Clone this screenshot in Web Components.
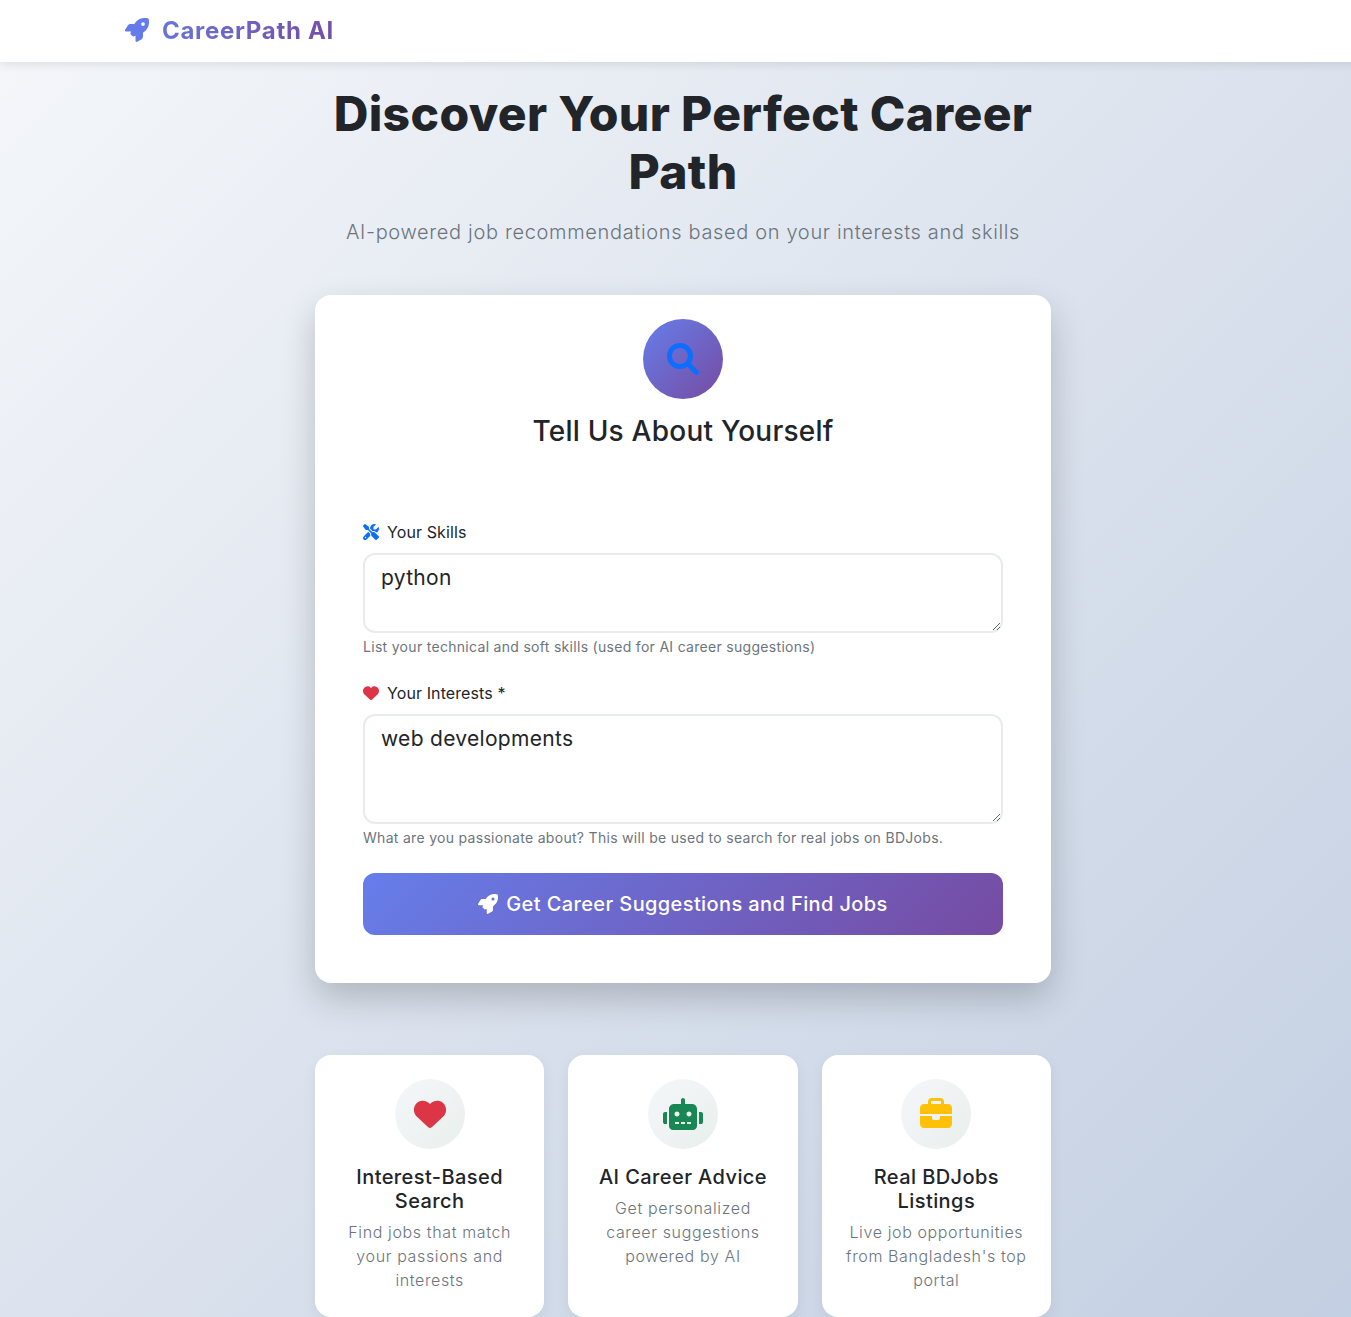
<!DOCTYPE html>
<html lang="en">
<head>
<meta charset="utf-8">
<title>CareerPath AI</title>
<style>
    html {
        height: 1317px;
        overflow: hidden;
    }

    body {
        margin: 0;
        width: 1366px;
        min-height: 1341px;
        font-family: Inter, "Open Sans", sans-serif;
        color: #212529;
        background: linear-gradient(135deg, #f5f7fa 0%, #c3cfe2 100%);
    }
</style>
</head>
<body>
<career-navbar brand="CareerPath AI"></career-navbar>

<page-hero
    heading="Discover Your Perfect Career Path"
    sub="AI-powered job recommendations based on your interests and skills"></page-hero>

<search-card heading="Tell Us About Yourself">
    <form-field icon="tools" color="#0d6efd" label="Your Skills" height="80"
        value="python"
        hint="List your technical and soft skills (used for AI career suggestions)"></form-field>
    <form-field icon="heart" color="#dc3545" label="Your Interests *" height="110"
        value="web developments"
        hint="What are you passionate about? This will be used to search for real jobs on BDJobs."></form-field>
    <gradient-button icon="rocket">Get Career Suggestions and Find Jobs</gradient-button>
</search-card>

<feature-grid>
    <feature-card icon="heart" color="#dc3545" heading="Interest-Based Search">Find jobs that match your passions and interests</feature-card>
    <feature-card icon="robot" color="#198754" heading="AI Career Advice">Get personalized career suggestions powered by AI</feature-card>
    <feature-card icon="briefcase" color="#ffc107" heading="Real BDJobs Listings">Live job opportunities from Bangladesh's top portal</feature-card>
</feature-grid>

<script>
const ICONS = {
    rocket: [512, 'M156.6 384.9L125.7 354c-8.5-8.5-11.5-20.8-7.7-32.2c3-8.9 7-20.5 11.8-33.8L24 288c-8.6 0-16.6-4.6-20.9-12.1s-4.2-16.7 .2-24.1l52.5-88.5c13-21.9 36.5-35.3 61.9-35.3l82.3 0c2.4-4 4.8-7.7 7.2-11.3C289.1-4.1 411.1-8.1 483.9 5.3c11.6 2.1 20.6 11.2 22.8 22.8c13.4 72.9 9.3 194.8-111.4 276.7c-3.5 2.4-7.3 4.8-11.3 7.2v82.3c0 25.4-13.4 49-35.3 61.9l-88.5 52.5c-7.4 4.4-16.6 4.5-24.1 .2s-12.1-12.2-12.1-20.9V380.8c-14.1 4.9-26.4 8.9-35.7 11.9c-11.2 3.6-23.4 .5-31.8-7.8zM384 168a40 40 0 1 0 0-80 40 40 0 1 0 0 80z'],
    search: [512, 'M500.3 443.7l-119.7-119.7c27.22-40.41 40.65-90.9 33.46-144.7C401.8 87.79 326.8 13.32 235.2 1.723C99.01-15.51-15.51 99.01 1.724 235.2c11.6 91.64 86.08 166.7 177.6 178.9c53.8 7.189 104.3-6.236 144.7-33.46l119.7 119.7c15.62 15.62 40.95 15.62 56.57 0C515.9 484.7 515.9 459.3 500.3 443.7zM79.1 208c0-70.58 57.42-128 128-128s128 57.42 128 128c0 70.58-57.42 128-128 128S79.1 278.6 79.1 208z'],
    heart: [512, 'M47.6 300.4L228.3 469.1c7.5 7 17.4 10.9 27.7 10.9s20.2-3.9 27.7-10.9L464.4 300.4c30.4-28.3 47.6-68 47.6-109.5v-5.8c0-69.9-50.5-129.5-119.4-141C347 36.5 300.6 51.4 268 84L256 96 244 84c-32.6-32.6-79-47.5-124.6-39.9C50.5 55.6 0 115.2 0 185.1v5.8c0 41.5 17.2 81.2 47.6 109.5z'],
    briefcase: [512, 'M184 48H328c4.4 0 8 3.6 8 8V96H176V56c0-4.4 3.6-8 8-8zm-56 8V96H64C28.7 96 0 124.7 0 160v96H192 320 512V160c0-35.3-28.7-64-64-64H384V56c0-30.9-25.1-56-56-56H184c-30.9 0-56 25.1-56 56zM512 288H320v32c0 17.7-14.3 32-32 32H224c-17.7 0-32-14.3-32-32V288H0V416c0 35.3 28.7 64 64 64H448c35.3 0 64-28.7 64-64V288z'],
    robot: [640, 'M9.375 233.4C3.375 239.4 0 247.5 0 256v128c0 8.5 3.375 16.62 9.375 22.62S23.5 416 32 416h32V224H32C23.5 224 15.38 227.4 9.375 233.4zM464 96H352V32c0-17.62-14.38-32-32-32S288 14.38 288 32v64H176C131.8 96 96 131.8 96 176V448c0 35.38 28.62 64 64 64h320c35.38 0 64-28.62 64-64V176C544 131.8 508.3 96 464 96zM256 416H192v-32h64V416zM224 296C201.9 296 184 278.1 184 256S201.9 216 224 216S264 233.9 264 256S246.1 296 224 296zM352 416H288v-32h64V416zM448 416h-64v-32h64V416zM416 296c-22.12 0-40-17.88-40-40S393.9 216 416 216S456 233.9 456 256S438.1 296 416 296zM630.6 233.4C624.6 227.4 616.5 224 608 224h-32v192h32c8.5 0 16.62-3.375 22.62-9.375S640 392.5 640 384V256C640 247.5 636.6 239.4 630.6 233.4z'],
    tools: [512, 'M78.6 5C69.1-2.4 55.6-1.5 47 7L7 47c-8.5 8.5-9.4 22-2.1 31.6l80 104c4.5 5.9 11.6 9.4 19 9.4h54.1l109 109c-14.7 29-10 65.4 14.3 89.6l112 112c12.5 12.5 32.8 12.5 45.3 0l64-64c12.5-12.5 12.5-32.8 0-45.3l-112-112c-24.2-24.2-60.6-29-89.6-14.3l-109-109V104c0-7.5-3.5-14.5-9.4-19L78.6 5zM19.9 396.1C7.2 408.8 0 426.1 0 444.1C0 481.6 30.4 512 67.9 512c18 0 35.3-7.2 48-19.9L233.7 374.3c-7.8-20.9-9-43.6-3.6-65.1l-61.7-61.7L19.9 396.1zM512 144c0-10.5-1.1-20.7-3.2-30.5c-2.4-11.2-16.1-14.1-24.2-6l-63.9 63.9c-3 3-7.1 4.7-11.3 4.7H352c-8.8 0-16-7.2-16-16V102.6c0-4.2 1.7-8.3 4.7-11.3l63.9-63.9c8.1-8.1 5.2-21.8-6-24.2C388.7 1.1 378.5 0 368 0C288.5 0 224 64.5 224 144l0 .8 85.3 85.3c36-9.1 75.8 .5 104 28.7L429 274.5c49-23 83-72.8 83-130.5zM56 432a24 24 0 1 1 48 0 24 24 0 1 1 -48 0z']
};

class FaIcon extends HTMLElement {
    constructor() {
        super();
        this.attachShadow({ mode: 'open' });
    }

    connectedCallback() {
        const [width, path] = ICONS[this.getAttribute('name')];
        const size = this.getAttribute('size') || 16;
        this.shadowRoot.innerHTML = `
            <style>
                :host { display: inline-flex; line-height: 0; color: inherit; }
                svg { height: ${size}px; width: ${size * width / 512}px; fill: currentColor; }
            </style>
            <svg viewBox="0 0 ${width} 512" aria-hidden="true"><path d="${path}"></path></svg>
        `;
    }
}

class CareerNavbar extends HTMLElement {
    constructor() {
        super();
        this.attachShadow({ mode: 'open' });
    }

    connectedCallback() {
        this.shadowRoot.innerHTML = `
            <style>
                :host {
                    display: block;
                    height: 62px;
                    background: #fff;
                    box-shadow: 0 2px 10px rgba(0, 0, 0, .1);
                    position: relative;
                }

                .inner {
                    width: 1116px;
                    margin: 0 auto;
                    height: 60px;
                    display: flex;
                    align-items: center;
                }

                .brand {
                    display: flex;
                    align-items: center;
                    gap: 13px;
                    font-size: 24px;
                    font-weight: 700;
                    letter-spacing: .7px;
                    background: linear-gradient(135deg, #667eea, #764ba2);
                    -webkit-background-clip: text;
                    background-clip: text;
                    color: transparent;
                }

                fa-icon { color: #667bea; }
            </style>
            <div class="inner">
                <div class="brand"><fa-icon name="rocket" size="24"></fa-icon><span>${this.getAttribute('brand')}</span></div>
            </div>
        `;
    }
}

class PageHero extends HTMLElement {
    constructor() {
        super();
        this.attachShadow({ mode: 'open' });
    }

    connectedCallback() {
        this.shadowRoot.innerHTML = `
            <style>
                :host {
                    display: block;
                    width: 736px;
                    margin: 0 auto;
                    padding-top: 23px;
                    text-align: center;
                }

                h1 {
                    margin: 0 0 16px;
                    font-size: 48px;
                    line-height: 58px;
                    font-weight: 800;
                    letter-spacing: .35px;
                }

                p {
                    margin: 0;
                    font-size: 20px;
                    line-height: 30px;
                    font-weight: 300;
                    letter-spacing: .66px;
                    color: #6c757d;
                }
            </style>
            <h1>${this.getAttribute('heading')}</h1>
            <p>${this.getAttribute('sub')}</p>
        `;
    }
}

class SearchCard extends HTMLElement {
    constructor() {
        super();
        this.attachShadow({ mode: 'open' });
    }

    connectedCallback() {
        this.shadowRoot.innerHTML = `
            <style>
                :host {
                    display: block;
                    box-sizing: border-box;
                    width: 736px;
                    height: 688px;
                    margin: 48px auto 0;
                    padding: 24px 48px 48px;
                    background: #fff;
                    border-radius: 16px;
                    box-shadow: 0 15px 35px rgba(0, 0, 0, .2);
                }

                .head {
                    display: flex;
                    flex-direction: column;
                    align-items: center;
                    margin-bottom: 72px;
                }

                .circle {
                    width: 80px;
                    height: 80px;
                    border-radius: 50%;
                    display: flex;
                    align-items: center;
                    justify-content: center;
                    background: linear-gradient(135deg, #667eea, #764ba2);
                    color: #0d6efd;
                    margin-bottom: 15px;
                }

                h3 {
                    margin: 0;
                    font-size: 28px;
                    line-height: 34px;
                    font-weight: 500;
                    letter-spacing: .23px;
                }
            </style>
            <div class="head">
                <div class="circle"><fa-icon name="search" size="32"></fa-icon></div>
                <h3>${this.getAttribute('heading')}</h3>
            </div>
            <slot></slot>
        `;
    }
}

class FormField extends HTMLElement {
    constructor() {
        super();
        this.attachShadow({ mode: 'open' });
    }

    connectedCallback() {
        this.shadowRoot.innerHTML = `
            <style>
                :host {
                    display: block;
                    margin-bottom: 23px;
                }

                label {
                    display: flex;
                    align-items: center;
                    gap: 8px;
                    height: 24px;
                    margin-bottom: 9px;
                    font-size: 16px;
                    font-weight: 400;
                    letter-spacing: .1px;
                    color: ${this.getAttribute('color')};
                }

                label span { color: #212529; }

                textarea {
                    display: block;
                    box-sizing: border-box;
                    width: 100%;
                    height: ${this.getAttribute('height')}px;
                    padding: 8px 16px;
                    border: 2px solid #e9ecef;
                    border-radius: 12px;
                    outline: none;
                    font: 400 21px/30px Inter, "Open Sans", sans-serif;
                    letter-spacing: .3px;
                    color: #212529;
                    background: #fff;
                }

                small {
                    display: block;
                    margin-top: 3px;
                    font-size: 14px;
                    line-height: 22px;
                    letter-spacing: .3px;
                    color: #6c757d;
                }
            </style>
            <label><fa-icon name="${this.getAttribute('icon')}" size="16"></fa-icon><span>${this.getAttribute('label')}</span></label>
            <textarea>${this.getAttribute('value')}</textarea>
            <small>${this.getAttribute('hint')}</small>
        `;
    }
}

class GradientButton extends HTMLElement {
    constructor() {
        super();
        this.attachShadow({ mode: 'open' });
    }

    connectedCallback() {
        this.shadowRoot.innerHTML = `
            <style>
                :host { display: block; margin-top: 24px; }

                button {
                    display: flex;
                    align-items: center;
                    justify-content: center;
                    gap: 8px;
                    width: 100%;
                    height: 62px;
                    border: 0;
                    border-radius: 12px;
                    background: linear-gradient(135deg, #667eea, #764ba2);
                    color: #fff;
                    font: 500 20px Inter, "Open Sans", sans-serif;
                    letter-spacing: .39px;
                }
            </style>
            <button type="button"><fa-icon name="${this.getAttribute('icon')}" size="20"></fa-icon><slot></slot></button>
        `;
    }
}

class FeatureGrid extends HTMLElement {
    constructor() {
        super();
        this.attachShadow({ mode: 'open' });
        this.shadowRoot.innerHTML = `
            <style>
                :host {
                    display: grid;
                    grid-template-columns: repeat(3, 1fr);
                    gap: 24px;
                    width: 736px;
                    margin: 72px auto 0;
                }
            </style>
            <slot></slot>
        `;
    }
}

class FeatureCard extends HTMLElement {
    constructor() {
        super();
        this.attachShadow({ mode: 'open' });
    }

    connectedCallback() {
        this.shadowRoot.innerHTML = `
            <style>
                :host {
                    display: block;
                    box-sizing: border-box;
                    height: 262px;
                    padding: 24px 22px;
                    background: #fff;
                    border-radius: 16px;
                    box-shadow: 0 5px 15px rgba(0, 0, 0, .06);
                    text-align: center;
                }

                .circle {
                    width: 70px;
                    height: 70px;
                    margin: 0 auto 16px;
                    border-radius: 50%;
                    display: flex;
                    align-items: center;
                    justify-content: center;
                    background: linear-gradient(135deg, #f5f7fa, #e8efec);
                    color: ${this.getAttribute('color')};
                }

                h5 {
                    margin: 0 0 7px;
                    font-size: 20px;
                    line-height: 24px;
                    font-weight: 500;
                    letter-spacing: .42px;
                }

                p {
                    margin: 0;
                    font-size: 16px;
                    line-height: 24px;
                    font-weight: 300;
                    letter-spacing: .62px;
                    color: #6c757d;
                }
            </style>
            <div class="circle"><fa-icon name="${this.getAttribute('icon')}" size="32"></fa-icon></div>
            <h5>${this.getAttribute('heading')}</h5>
            <p><slot></slot></p>
        `;
    }
}

window.customElements.define('fa-icon', FaIcon);
window.customElements.define('career-navbar', CareerNavbar);
window.customElements.define('page-hero', PageHero);
window.customElements.define('search-card', SearchCard);
window.customElements.define('form-field', FormField);
window.customElements.define('gradient-button', GradientButton);
window.customElements.define('feature-grid', FeatureGrid);
window.customElements.define('feature-card', FeatureCard);
</script>
</body>
</html>
